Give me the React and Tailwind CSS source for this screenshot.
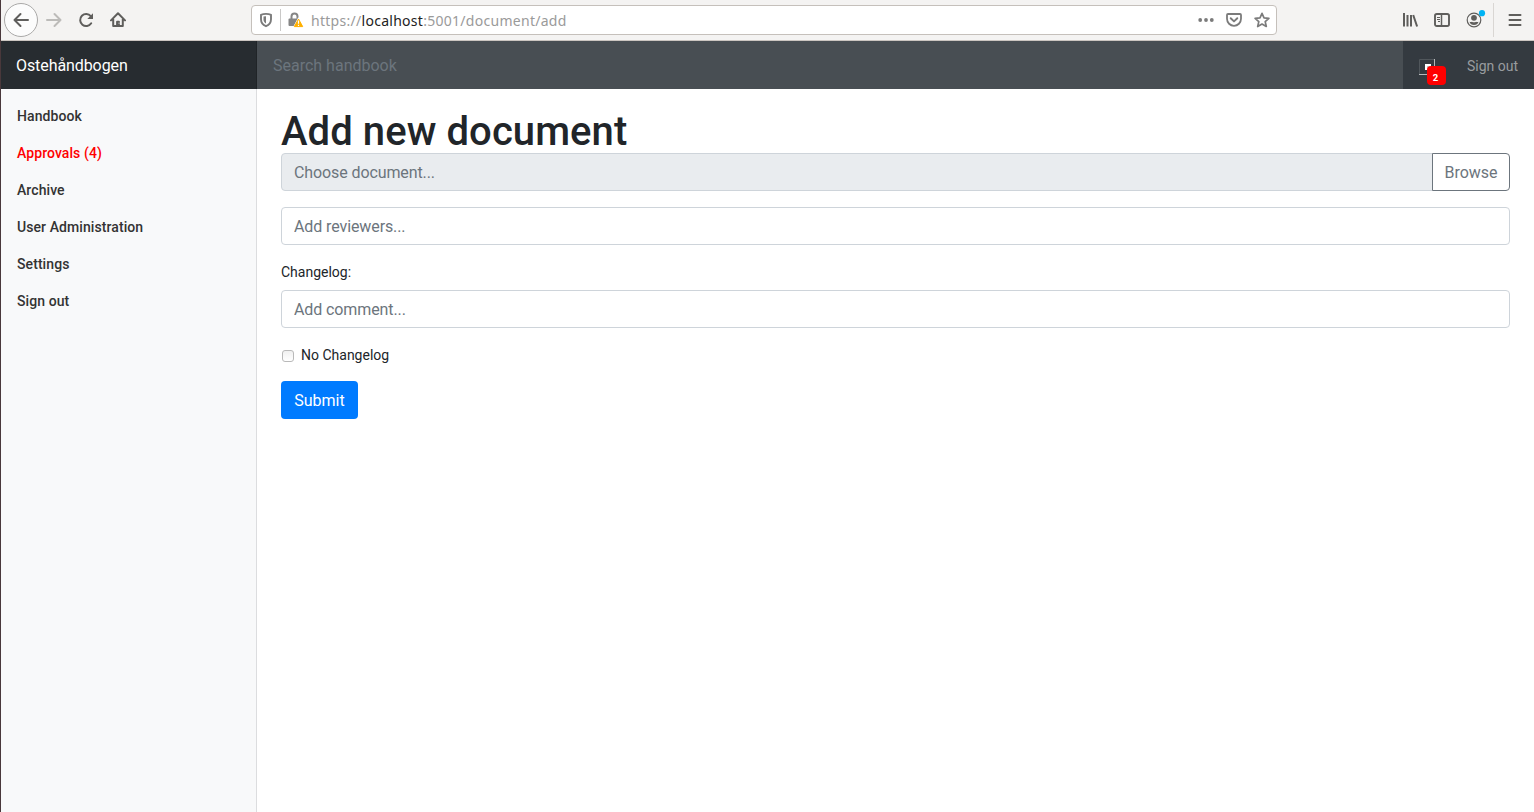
const ink = '#5f5e5c';

function Icon({ children, className = '' }) {
  return (
    <svg viewBox="0 0 16 16" className={`size-4 shrink-0 ${className}`} fill="none">
      {children}
    </svg>
  );
}

function Toolbar() {
  return (
    <div className="flex h-[41px] shrink-0 items-center border-b border-[#ccc6c1] bg-[#f4f3f2] pl-[3px] pr-3">
      <div className="flex size-[34px] items-center justify-center rounded-full border border-[#aaa9a8] bg-[#fcfcfc]">
        <Icon>
          <path d="M15 8H1.5M7.5 2 1.5 8l6 6" stroke={ink} strokeWidth="2" strokeLinecap="round" strokeLinejoin="round" />
        </Icon>
      </div>
      <div className="ml-2 flex gap-4">
        <Icon>
          <path d="M1 8h13.5M8.5 2l6 6-6 6" stroke="#bcbbb9" strokeWidth="2" strokeLinecap="round" strokeLinejoin="round" />
        </Icon>
        <Icon>
          <path d="M13.200 11.300A6 6 0 1 1 12.800 4.200" stroke={ink} strokeWidth="2" strokeLinecap="round" />
          <path d="M15 1.300v5.700H9.300z" fill={ink} />
        </Icon>
        <Icon>
          <path d="M1 8.4 8 1.3l7 7.1M3.2 7v7.1h9.6V7" stroke={ink} strokeWidth="2" strokeLinecap="round" strokeLinejoin="round" />
          <path d="M6.1 14V9.7q0-1 1-1h1.8q1 0 1 1V14z" fill={ink} />
          <path d="M8.6 11.2h.9" stroke="#f4f3f2" />
        </Icon>
      </div>
      <div className="ml-[125px] flex h-[30px] w-[1026px] items-center rounded-[4px] border border-[#c5c0bb] bg-white pl-1.5 pr-1.5">
        <Icon>
          <path d="M8 1.9c2 0 3.7.3 5 .9v4.4c0 3.4-1.7 5.6-5 7-3.300-1.400-5-3.600-5-7V2.800c1.300-.6 3-.9 5-.9z" stroke="#7b7b7b" strokeWidth="1.9" strokeLinejoin="round" />
          <path d="M8 4.300v7.300c-1.700-1-2.500-2.300-2.500-4.300V4.600z" fill="#7b7b7b" />
        </Icon>
        <div className="ml-1.5 h-[22px] w-px bg-[#c9c8c7]" />
        <Icon className="ml-[7px]">
          <path d="M3.500 8V4.500a3 3 0 0 1 6 0V7" stroke="#858585" strokeWidth="2" />
          <path d="M1.500 6.500h9.200L7 14H1.500Q.5 14 .5 13V7.500q0-1 1-1z" fill="#858585" />
          <path d="M10.500 5.800 5.500 15.200h10z" fill="#fff" stroke="#fff" />
          <path d="M10.500 7 6.300 14.600h8.400z" fill="#ffb000" stroke="#ffb000" strokeLinejoin="round" />
          <path d="M10.500 8.500v3.300M10.500 12.800v1.300" stroke="#fff" strokeWidth="1.200" />
        </Icon>
        <div className="ml-[7px] whitespace-nowrap pt-px font-['Noto_Sans',sans-serif] text-[14px] leading-none tracking-[0.28px] text-[#9a9a9a]">
          https://<span className="text-[#222]">localhost</span>:5001/document/add
        </div>
        <div className="ml-auto flex gap-3">
          <Icon>
            <circle cx="2.200" cy="8" r="1.900" fill="#7b7b7b" />
            <circle cx="8" cy="8" r="1.900" fill="#7b7b7b" />
            <circle cx="13.800" cy="8" r="1.900" fill="#7b7b7b" />
          </Icon>
          <Icon>
            <path d="M2 2h12q1 0 1 1v3.800a7 7 0 0 1-14 0V3q0-1 1-1z" stroke="#7b7b7b" strokeWidth="1.800" />
            <path d="m4.700 6.200 3.300 3.200 3.300-3.200" stroke="#7b7b7b" strokeWidth="1.900" strokeLinecap="round" strokeLinejoin="round" />
          </Icon>
          <Icon>
            <path d="m8 1.300 2 4.500 4.900.5-3.700 3.300 1.100 4.900L8 12l-4.300 2.500 1.100-4.900-3.700-3.300 4.900-.5z" stroke="#7b7b7b" strokeWidth="1.700" strokeLinejoin="round" />
          </Icon>
        </div>
      </div>
      <div className="ml-auto flex items-center">
        <Icon>
          <path d="M2 1v13.500M5.500 3v11.500M9 3v11.500M11.200 3l3.900 11.500" stroke={ink} strokeWidth="2" />
        </Icon>
        <Icon className="ml-4">
          <rect x="1" y="2" width="14" height="12" rx="1.800" stroke={ink} strokeWidth="1.900" />
          <path d="M7.500 2v12" stroke={ink} strokeWidth="1.500" />
          <path d="M3 5.500h3M3 7.500h3M4 9.500h2" stroke={ink} />
        </Icon>
        <svg viewBox="0 0 20 20" className="ml-4 size-5" fill="none">
          <circle cx="8" cy="10" r="6.800" stroke={ink} strokeWidth="1.200" />
          <circle cx="8" cy="7.800" r="2.900" fill={ink} />
          <path d="M3.500 11.800q1.500.4 2.400-.1Q8 13 10.100 11.700q1 .5 2.400.1Q11.500 15 8 15t-4.500-3.200z" fill={ink} />
          <circle cx="16" cy="3.200" r="3.100" fill="#00b3f4" />
        </svg>
        <div className="ml-[7px] h-[34px] w-px bg-[#d9d6d3]" />
        <svg viewBox="0 0 14 14" className="ml-[14px] size-3.5" fill="none">
          <path d="M1.500 2h11M1.500 7h11M1.500 12h11" stroke={ink} strokeWidth="2" strokeLinecap="round" />
        </svg>
      </div>
    </div>
  );
}

function Navbar() {
  return (
    <header className="flex h-12 shrink-0 bg-[#343a40] text-base">
      <div className="flex w-64 items-center border-r border-[#202427] bg-[#272c30] pt-0.5 pl-[15px] tracking-[-0.08px] text-white">Ostehåndbogen</div>
      <input className="min-w-0 flex-1 bg-[#484e53] px-4 pt-0.5 outline-none placeholder:text-[#6c757d]" placeholder="Search handbook" />
      <div className="flex w-[131px] items-center justify-between px-4 pt-0.5">
        <div className="relative top-px size-4">
          <svg viewBox="0 0 16 16" className="size-4" fill="none">
            <path d="M.5 16V.5H16" stroke="#50565b" />
            <path d="M15.500 0v15.500H0" stroke="#b5b8ba" />
            <path d="M6 5h6v6H6z" fill="#fff" />
            <path d="M8 7h3v3H8z" fill="#c4c6c8" />
          </svg>
          <span className="absolute left-2 top-[7px] flex h-[19px] w-[19px] items-center justify-center rounded-[4px] bg-[#f00] pr-0.5 pt-[5px] text-[9.500px] font-bold leading-none text-white">2</span>
        </div>
        <a className="text-sm text-[#999c9f]">Sign out</a>
      </div>
    </header>
  );
}

const links = ['Handbook', 'Approvals (4)', 'Archive', 'User Administration', 'Settings', 'Sign out'];
const field = 'block h-[38px] w-full rounded-[4px] border border-[#ced4da] bg-white px-3 text-base tracking-[-0.1px] outline-none placeholder:text-[#6c757d]';

export default function App() {
  return (
    <div className="flex h-screen flex-col overflow-hidden border-l border-[#49383b] bg-white font-[Roboto,sans-serif] text-[#212529]">
      <Toolbar />
      <Navbar />
      <div className="flex min-h-0 flex-1">
        <nav className="w-64 shrink-0 border-r border-[#dcdddf] bg-[#f8f9fa] pt-[9px]">
          {links.map((label) => (
            <a key={label} className={`block px-4 py-2 text-sm leading-[21px] font-medium tracking-[0.08px] ${label.startsWith('Approvals') ? 'text-[#f00]' : 'text-[#333]'}`}>
              {label}
            </a>
          ))}
        </nav>
        <main className="flex-1 px-6 pt-[19px] text-sm">
          <h1 className="mb-[-3px] text-[40px] leading-[48px] font-medium tracking-[0.08px]">Add new document</h1>
          <div className="mb-4 flex">
            <input readOnly placeholder="Choose document..." className="h-[38px] min-w-0 flex-1 rounded-l-[4px] border border-[#ced4da] bg-[#e9ecef] px-3 text-base tracking-[-0.1px] outline-none placeholder:text-[#6c757d]" />
            <button className="-ml-px h-[38px] w-[78px] rounded-r-[4px] border border-[#6c757d] bg-white pt-0.5 text-base text-[#6c757d]">Browse</button>
          </div>
          <input className={field} placeholder="Add reviewers..." />
          <label className="mt-[17px] mb-[7px] block leading-[21px]">Changelog:</label>
          <input className={field} placeholder="Add comment..." />
          <label className="mt-[17px] flex items-center leading-[21px]">
            <input type="checkbox" className="ml-px size-3 appearance-none rounded-[3px] border border-[#b9b9b9] bg-linear-to-b from-[#f0f0f0] to-white" />
            <span className="ml-[7px]">No Changelog</span>
          </label>
          <button className="mt-[15px] h-[38px] w-[77px] rounded-[4px] bg-[#007bff] pt-0.5 text-base text-white">Submit</button>
        </main>
      </div>
    </div>
  );
}
